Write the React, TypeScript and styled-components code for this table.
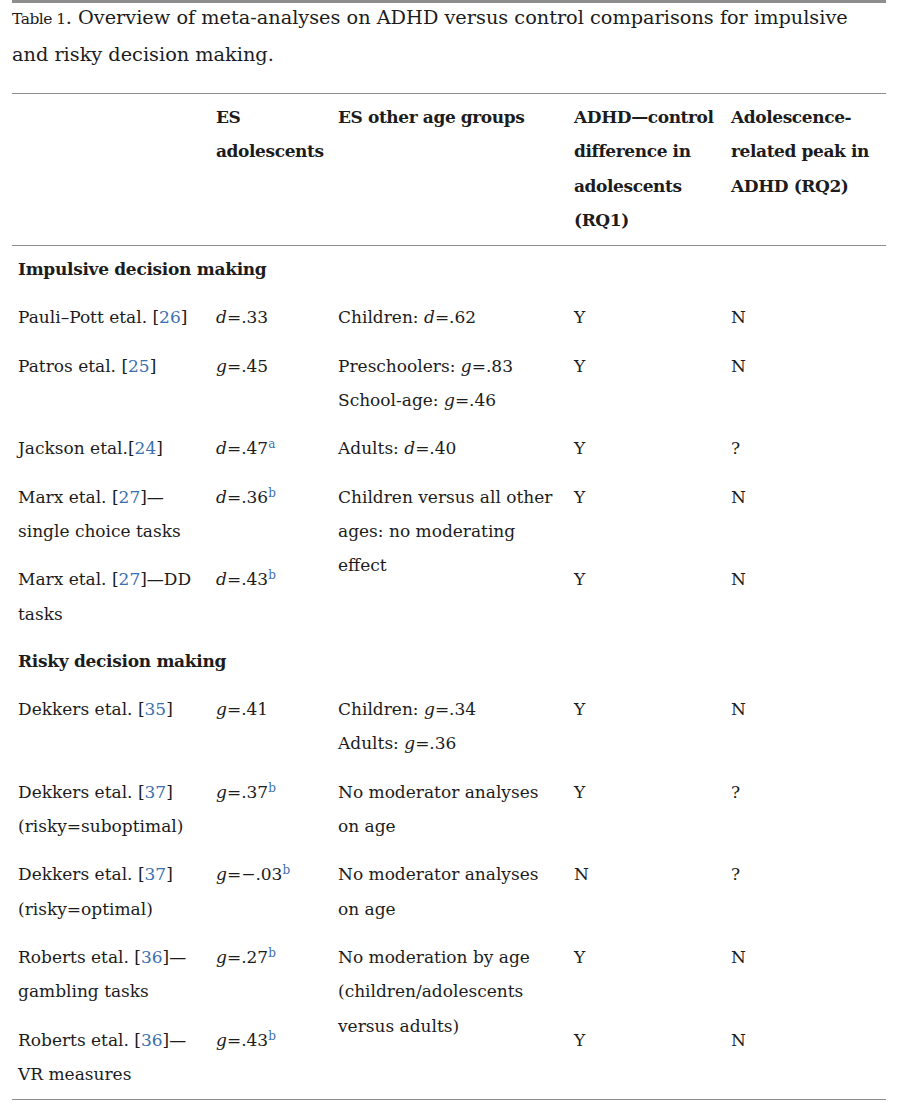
import React from 'react'
import styled, { createGlobalStyle } from 'styled-components'

const GlobalStyle = createGlobalStyle`
    body {
        margin: 0;
        background: #ffffff;
        color: #1c1c1c;
        font-family: "DejaVu Serif", "Liberation Serif", serif;
    }
`

const Wrapper = styled.div`
    width: 874px;
    margin-left: 12px;
    border-top: 3px solid #8e8e8e;
`

const Caption = styled.div`
    font-size: 19.3px;
    line-height: 35px;
    margin-top: -3px;
    margin-bottom: 21px;
`

const CaptionLabel = styled.span`
    font-size: 15.5px;
    letter-spacing: -0.5px;
`

const Table = styled.table`
    width: 100%;
    border-collapse: collapse;
    table-layout: fixed;
    font-size: 17px;
    line-height: 34.3px;
    border-top: 1.5px solid #8e8e8e;
    border-bottom: 1.5px solid #8e8e8e;
`

const Col = styled.col<{ $w: number }>`
    width: ${(p) => p.$w}px;
`

const HeadCell = styled.th`
    text-align: left;
    vertical-align: top;
    font-weight: bold;
    letter-spacing: -0.4px;
    padding: 6px 6px 8px;
    border-bottom: 1.5px solid #8e8e8e;
`

const Cell = styled.td<{ $last?: boolean }>`
    vertical-align: top;
    padding: 7px 6px ${(p) => (p.$last ? '8px' : '7px')};
`

const SectionCell = styled.td`
    font-weight: bold;
    letter-spacing: -0.3px;
    padding: 6px 6px 7px;
`

const Ref = styled.a`
    color: #3a6fb0;
    text-decoration: none;
`

const Sup = styled.sup`
    color: #3a6fb0;
    font-size: 12px;
    line-height: 0;
    vertical-align: 6px;
`

const Line = styled.span`
    display: block;
`

type Row = {
    study: React.ReactNode
    es: React.ReactNode
    other?: React.ReactNode
    span?: number
    rq1: string
    rq2: string
}

const es = (letter: string, value: string, note?: string) => (
    <>
        <i>{letter}</i>={value}
        {note && <Sup>{note}</Sup>}
    </>
)

const lines = (...parts: React.ReactNode[]) => (
    <>
        {parts.map((p, i) => (
            <Line key={i}>{p}</Line>
        ))}
    </>
)

const impulsive: Row[] = [
    {
        study: <>Pauli–Pott etal. [<Ref>26</Ref>]</>,
        es: es('d', '.33'),
        other: <>Children: <i>d</i>=.62</>,
        rq1: 'Y',
        rq2: 'N',
    },
    {
        study: <>Patros etal. [<Ref>25</Ref>]</>,
        es: es('g', '.45'),
        other: lines(
            <>Preschoolers: <i>g</i>=.83</>,
            <>School-age: <i>g</i>=.46</>,
        ),
        rq1: 'Y',
        rq2: 'N',
    },
    {
        study: <>Jackson etal.[<Ref>24</Ref>]</>,
        es: es('d', '.47', 'a'),
        other: <>Adults: <i>d</i>=.40</>,
        rq1: 'Y',
        rq2: '?',
    },
    {
        study: lines(<>Marx etal. [<Ref>27</Ref>]—</>, 'single choice tasks'),
        es: es('d', '.36', 'b'),
        other: lines('Children versus all other', 'ages: no moderating', 'effect'),
        span: 2,
        rq1: 'Y',
        rq2: 'N',
    },
    {
        study: lines(<>Marx etal. [<Ref>27</Ref>]—DD</>, 'tasks'),
        es: es('d', '.43', 'b'),
        rq1: 'Y',
        rq2: 'N',
    },
]

const risky: Row[] = [
    {
        study: <>Dekkers etal. [<Ref>35</Ref>]</>,
        es: es('g', '.41'),
        other: lines(
            <>Children: <i>g</i>=.34</>,
            <>Adults: <i>g</i>=.36</>,
        ),
        rq1: 'Y',
        rq2: 'N',
    },
    {
        study: lines(<>Dekkers etal. [<Ref>37</Ref>]</>, '(risky=suboptimal)'),
        es: es('g', '.37', 'b'),
        other: lines('No moderator analyses', 'on age'),
        rq1: 'Y',
        rq2: '?',
    },
    {
        study: lines(<>Dekkers etal. [<Ref>37</Ref>]</>, '(risky=optimal)'),
        es: es('g', '−.03', 'b'),
        other: lines('No moderator analyses', 'on age'),
        rq1: 'N',
        rq2: '?',
    },
    {
        study: lines(<>Roberts etal. [<Ref>36</Ref>]—</>, 'gambling tasks'),
        es: es('g', '.27', 'b'),
        other: lines('No moderation by age', '(children/adolescents', 'versus adults)'),
        span: 2,
        rq1: 'Y',
        rq2: 'N',
    },
    {
        study: lines(<>Roberts etal. [<Ref>36</Ref>]—</>, 'VR measures'),
        es: es('g', '.43', 'b'),
        rq1: 'Y',
        rq2: 'N',
    },
]

const renderRows = (rows: Row[], lastGroup: boolean) =>
    rows.map((r, i) => {
        const last = lastGroup && i === rows.length - 1
        return (
            <tr key={i}>
                <Cell $last={last}>{r.study}</Cell>
                <Cell $last={last}>{r.es}</Cell>
                {r.other !== undefined && (
                    <Cell rowSpan={r.span} $last={last}>
                        {r.other}
                    </Cell>
                )}
                <Cell $last={last}>{r.rq1}</Cell>
                <Cell $last={last}>{r.rq2}</Cell>
            </tr>
        )
    })

export default function App() {
    return (
        <>
            <GlobalStyle />
            <Wrapper>
                <Caption>
                    <Line>
                        <CaptionLabel>Table 1</CaptionLabel>. Overview of meta-analyses on ADHD
                        versus control comparisons for impulsive
                    </Line>
                    <Line>and risky decision making.</Line>
                </Caption>
                <Table>
                    <colgroup>
                        <Col $w={198} />
                        <Col $w={122} />
                        <Col $w={236} />
                        <Col $w={157} />
                        <Col $w={161} />
                    </colgroup>
                    <thead>
                        <tr>
                            <HeadCell />
                            <HeadCell>{lines('ES', 'adolescents')}</HeadCell>
                            <HeadCell>ES other age groups</HeadCell>
                            <HeadCell>
                                {lines('ADHD—control', 'difference in', 'adolescents', '(RQ1)')}
                            </HeadCell>
                            <HeadCell>
                                {lines('Adolescence-', 'related peak in', 'ADHD (RQ2)')}
                            </HeadCell>
                        </tr>
                    </thead>
                    <tbody>
                        <tr>
                            <SectionCell colSpan={5}>Impulsive decision making</SectionCell>
                        </tr>
                        {renderRows(impulsive, false)}
                        <tr>
                            <SectionCell colSpan={5}>Risky decision making</SectionCell>
                        </tr>
                        {renderRows(risky, true)}
                    </tbody>
                </Table>
            </Wrapper>
        </>
    )
}
